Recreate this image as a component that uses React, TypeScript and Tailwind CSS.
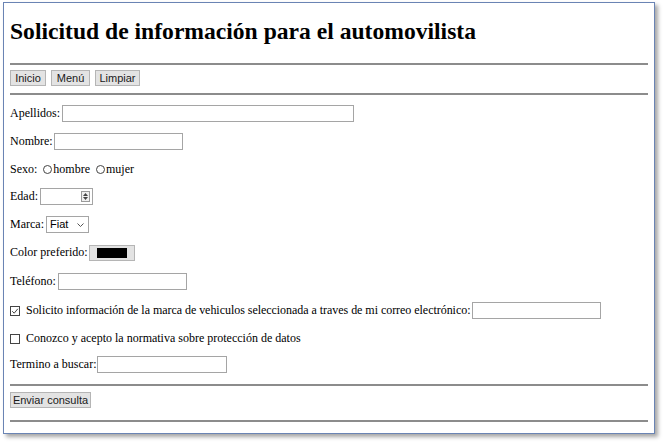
import React from "react";

const serif = { fontFamily: '"Liberation Serif", "Times New Roman", serif' };

function Input({ w }: { w: string }) {
  return <div className={`h-[17px] border border-[#a5a5a5] bg-white ${w}`} />;
}

function Btn({ children, w }: { children: React.ReactNode; w: string }) {
  return (
    <div
      className={`flex h-[16px] items-center justify-center border border-[#b5b5b5] bg-[#e3e3e3] text-[11px] leading-none text-[#1a1a1a] ${w}`}
      style={{ fontFamily: '"Liberation Sans", Arial, sans-serif' }}
    >
      {children}
    </div>
  );
}

function Hr() {
  return <div className="h-[2px] w-full bg-[#8c8c8c]" />;
}

function Radio() {
  return <div className="h-[9px] w-[9px] rounded-full border border-[#444] bg-white" />;
}

function Check({ checked }: { checked?: boolean }) {
  return (
    <svg width="10" height="10" viewBox="0 0 10 10" className="shrink-0">
      <rect x="0.5" y="0.5" width="9" height="9" fill="white" stroke="#444" />
      {checked && <path d="M2.2 5.2 L4.2 7.2 L7.8 2.8" stroke="#444" fill="none" strokeWidth="1" />}
    </svg>
  );
}

export default function App() {
  return (
    <div className="h-[444px] w-[664px] bg-white">
      <div
        className="ml-[3px] mt-[2px] flex h-[432px] w-[652px] flex-col border border-[#6a84b4] bg-white pl-[6px] pr-[6px] text-[12px] leading-[17px] text-black shadow-[3px_3px_4px_rgba(0,0,0,0.35)]"
        style={serif}
      >
        <h1 className="mt-[14px] h-[28px] text-[23.6px] font-bold leading-[28px]">
          Solicitud de información para el automovilista
        </h1>
        <div className="mt-[18px]">
          <Hr />
        </div>
        <div className="mt-[5px] flex gap-[5px]">
          <Btn w="w-[36px]">Inicio</Btn>
          <Btn w="w-[39px]">Menú</Btn>
          <Btn w="w-[45px]">Limpiar</Btn>
        </div>
        <div className="mt-[7px]">
          <Hr />
        </div>

        <div className="mt-[10px] flex h-[17px] items-center gap-[2px]">
          <span>Apellidos:</span>
          <Input w="w-[292px]" />
        </div>

        <div className="mt-[11px] flex h-[17px] items-center gap-[1px]">
          <span>Nombre:</span>
          <Input w="w-[129px]" />
        </div>

        <div className="mt-[11px] flex h-[17px] items-center">
          <span>Sexo:</span>
          <span className="ml-[6px]"><Radio /></span>
          <span className="ml-[1px]">hombre</span>
          <span className="ml-[6px]"><Radio /></span>
          <span className="ml-[1px]">mujer</span>
        </div>

        <div className="mt-[10px] flex h-[17px] items-center gap-[2px]">
          <span>Edad:</span>
          <div className="flex h-[17px] w-[53px] items-center justify-end border border-[#a5a5a5] bg-white pr-[2px]">
            <div className="flex h-[11px] w-[9px] flex-col items-center justify-center gap-[1px] border border-[#9a9a9a] bg-[#f0f0f0]">
              <svg width="5" height="3" viewBox="0 0 5 3"><path d="M0 3 L2.5 0 L5 3 Z" fill="#444" /></svg>
              <svg width="5" height="3" viewBox="0 0 5 3"><path d="M0 0 L2.5 3 L5 0 Z" fill="#444" /></svg>
            </div>
          </div>
        </div>

        <div className="mt-[11px] flex h-[17px] items-center gap-[2px]">
          <span>Marca:</span>
          <div
            className="flex h-[17px] w-[43px] items-center justify-between border border-[#a5a5a5] bg-white pl-[3px] pr-[4px] text-[11px]"
            style={{ fontFamily: '"Liberation Sans", Arial, sans-serif' }}
          >
            <span>Fiat</span>
            <svg width="7" height="4" viewBox="0 0 7 4"><path d="M0.5 0.5 L3.5 3.5 L6.5 0.5" stroke="#555" fill="none" strokeWidth="1" /></svg>
          </div>
        </div>

        <div className="mt-[11px] flex h-[17px] items-center gap-[1px]">
          <span>Color preferido:</span>
          <div className="flex h-[16px] w-[46px] items-center justify-center border border-[#b5b5b5] bg-[#e3e3e3]">
            <div className="h-[10px] w-[30px] bg-black" />
          </div>
        </div>

        <div className="mt-[12px] flex h-[17px] items-center gap-[2px]">
          <span>Teléfono:</span>
          <Input w="w-[129px]" />
        </div>

        <div className="mt-[12px] flex h-[17px] items-center">
          <Check checked />
          <span className="ml-[6px] tracking-[-0.04px]">
            Solicito información de la marca de vehiculos seleccionada a traves de mi correo electrónico:
          </span>
          <span className="ml-[2px]">
            <Input w="w-[129px]" />
          </span>
        </div>

        <div className="mt-[11px] flex h-[17px] items-center">
          <Check />
          <span className="ml-[6px]">Conozco y acepto la normativa sobre protección de datos</span>
        </div>

        <div className="mt-[9px] flex h-[17px] items-center gap-[1px]">
          <span>Termino a buscar:</span>
          <Input w="w-[130px]" />
        </div>

        <div className="mt-[11px]">
          <Hr />
        </div>
        <div className="mt-[6px] flex">
          <Btn w="w-[81px]">Enviar consulta</Btn>
        </div>
        <div className="mt-[12px]">
          <Hr />
        </div>
      </div>
    </div>
  );
}
